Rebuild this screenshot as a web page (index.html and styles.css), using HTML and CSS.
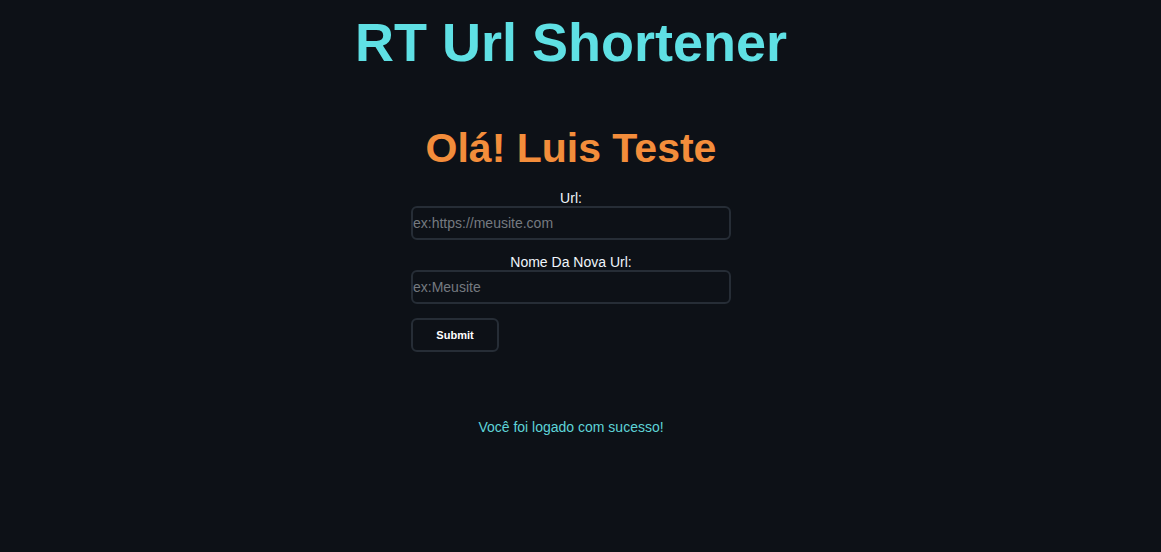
FILE: index.html
```html
<!DOCTYPE html>
<html lang="pt">
<head>
<meta charset="utf-8">
<title>RT Url Shortener</title>
<link rel="stylesheet" href="styles.css">
</head>
<body>
<div class="page">
  <h1 class="title">RT Url Shortener</h1>
  <h2 class="greeting">Olá! Luis Teste</h2>
  <form class="form">
    <label class="label" for="url">Url:</label>
    <input class="input" id="url" type="text" placeholder="ex:https://meusite.com">
    <label class="label" for="name">Nome Da Nova Url:</label>
    <input class="input" id="name" type="text" placeholder="ex:Meusite">
    <button class="submit" type="button">Submit</button>
  </form>
  <p class="message">Você foi logado com sucesso!</p>
</div>
</body>
</html>
```

FILE: styles.css
```css
html, body {
  margin: 0;
  padding: 0;
  background: #0d1117;
  height: 100%;
}
body {
  font-family: "Liberation Sans", Arial, sans-serif;
  color: #f0f6fc;
}
.page {
  display: flex;
  flex-direction: column;
  align-items: center;
  padding-right: 19px;
}
.title {
  margin: 11px 0 0;
  font-size: 54px;
  font-weight: bold;
  color: #5fe0e4;
  line-height: 1.15;
}
.greeting {
  margin: 52px 0 0;
  font-size: 41px;
  font-weight: bold;
  color: #f38d3b;
  line-height: 1.15;
}
.form {
  display: flex;
  flex-direction: column;
  align-items: center;
  width: 320px;
  margin-top: 18px;
}
.label {
  font-size: 14px;
  line-height: 16px;
  color: #f0f6fc;
}
.input {
  box-sizing: border-box;
  width: 320px;
  height: 34px;
  margin: 0 0 14px;
  padding: 0;
  background: #0d1117;
  border: 2px solid #262d36;
  border-radius: 6px;
  font-family: "Liberation Sans", Arial, sans-serif;
  font-size: 14px;
  color: #c9d1d9;
  outline: none;
}
.input::placeholder {
  color: #757a80;
}
.submit {
  align-self: flex-start;
  box-sizing: border-box;
  width: 88px;
  height: 34px;
  margin-top: 0;
  background: #0d1117;
  border: 2px solid #262d36;
  border-radius: 6px;
  font-family: "Liberation Sans", Arial, sans-serif;
  font-size: 11px;
  font-weight: bold;
  color: #ffffff;
}
.message {
  margin: 67px 0 0;
  font-size: 14px;
  color: #5ed4d8;
}
```
